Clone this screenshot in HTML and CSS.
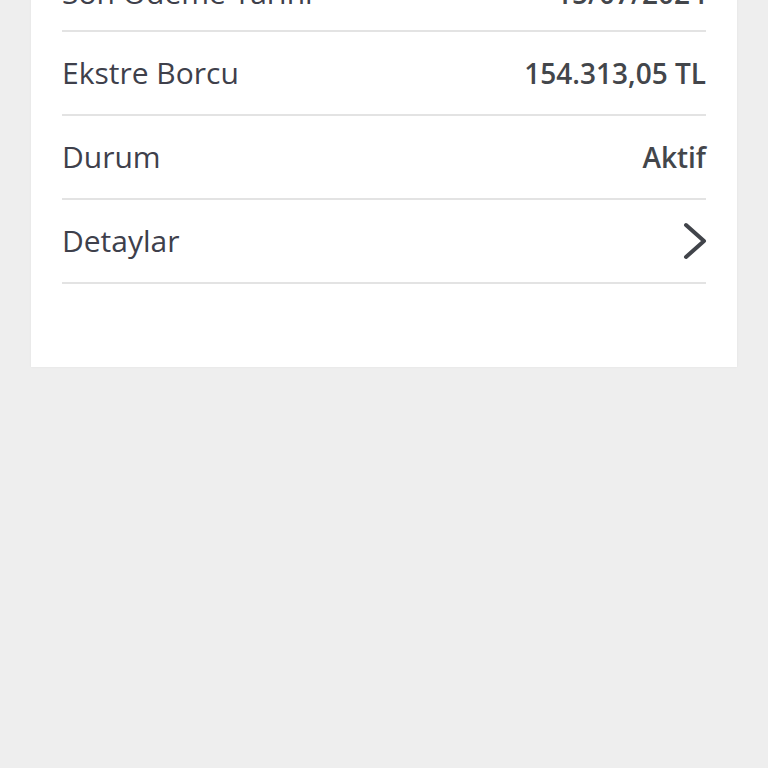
FILE: index.html
```html
<!DOCTYPE html>
<html lang="tr">
<head>
<meta charset="utf-8">
<link rel="stylesheet" href="styles.css">
</head>
<body>
<div class="card">
  <div class="list">
    <div class="row row-first"><span class="label">Son Ödeme Tarihi</span><span class="value">15/07/2024</span></div>
    <div class="row"><span class="label">Ekstre Borcu</span><span class="value">154.313,05 TL</span></div>
    <div class="row"><span class="label">Durum</span><span class="value">Aktif</span></div>
    <div class="row"><span class="label">Detaylar</span>
      <svg class="chev" width="26" height="40" viewBox="0 0 26 40"><path d="M4 4 L22 20 L4 36" fill="none" stroke="#41444a" stroke-width="4" stroke-linecap="round" stroke-linejoin="round"/></svg>
    </div>
  </div>
</div>
</body>
</html>
```
FILE: styles.css
```css
html, body {
  margin: 0;
  padding: 0;
  background: #eeeeee;
  height: 100%;
  overflow: hidden;
}
.card {
  margin: 0 31px;
  background: #ffffff;
  padding: 0 31px 83px;
  box-shadow: 0 0 2px rgba(0,0,0,0.06);
}
.list {
  margin-top: -52px;
}
.row {
  display: flex;
  align-items: center;
  justify-content: space-between;
  border-bottom: 2px solid #e3e3e3;
  font-family: "Open Sans", Lato, sans-serif;
  line-height: 34px;
  box-sizing: border-box;
  height: 84px;
}
.row-first {
  padding-top: 8px;
}
.label {
  color: #3e404b;
  font-weight: 400;
  font-size: 30px;
}
.value {
  color: #43464b;
  font-weight: 600;
  font-size: 28px;
}
.chev {
  display: block;
  margin-right: -2px;
}
```
